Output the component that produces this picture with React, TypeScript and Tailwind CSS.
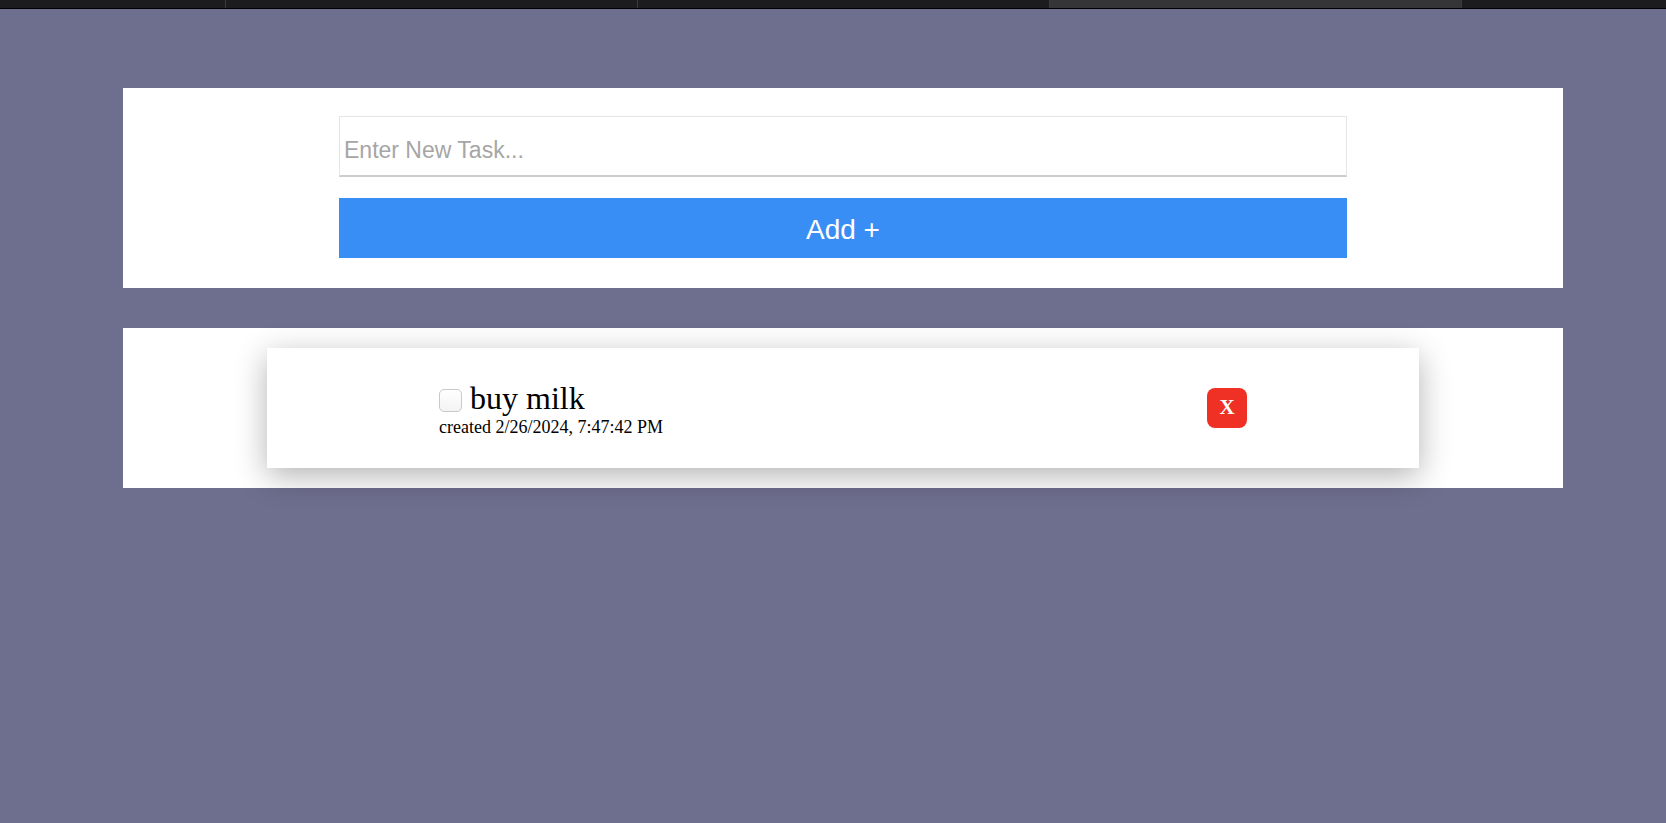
const TABS = [
  { w: 'w-[225px]', active: false },
  { w: 'w-[412px]', active: false },
  { w: 'w-[412px]', active: false },
  { w: 'w-[412px]', active: true },
  { w: 'flex-1', active: false },
];

export default function App() {
  return (
    <div className="min-h-screen bg-[#6e6e8e] flex flex-col">
      {/* browser tab strip */}
      <div className="flex h-[9px] bg-[#1c1c1e] border-b border-black">
        {TABS.map((t, i) => (
          <div
            key={i}
            className={`${t.w} h-full ${t.active ? 'bg-[#353538]' : 'bg-[#1c1c1e]'} ${i > 0 ? 'border-l border-[#3a3a3c]' : ''}`}
          />
        ))}
      </div>

      <div className="ml-[123px] w-[1440px] mt-[79px] flex flex-col gap-[40px]">
        {/* new task form */}
        <div className="bg-white pt-[28px] pb-[30px]">
          <div className="w-[1008px] mx-auto flex flex-col gap-[21px]">
            <input
              type="text"
              placeholder="Enter New Task..."
              className="h-[61px] w-full border border-[#e6e6e6] border-b-2 border-b-[#cdcdcd] pl-[4px] pt-[8px] text-[23px] text-gray-800 placeholder:text-[#a6a6a6] outline-none font-['Liberation_Sans',Arial,sans-serif]"
            />
            <button className="h-[60px] w-full bg-[#388ef5] text-white text-[28px] pt-[3px] font-['Liberation_Sans',Arial,sans-serif]">
              Add +
            </button>
          </div>
        </div>

        {/* task list */}
        <div className="bg-white py-[20px]">
          <div className="w-[1152px] h-[120px] mx-auto bg-white shadow-[0_8px_30px_rgba(0,0,0,0.3)] flex items-center justify-between px-[172px] font-['Liberation_Serif','Times_New_Roman',serif]">
            <div className="flex flex-col items-start text-black">
              <div className="flex items-center">
                <input
                  type="checkbox"
                  className="appearance-none w-[23px] h-[23px] mt-[5px] mr-[8px] rounded-[5px] border border-[#c9c9c9] bg-gradient-to-b from-white to-[#f3f3f3]"
                />
                <span className="text-[32px] leading-[37px] pt-[1px]">buy milk</span>
              </div>
              <span className="text-[18px] leading-[21px]">created 2/26/2024, 7:47:42 PM</span>
            </div>
            <button className="w-[40px] h-[40px] rounded-lg bg-[#ee3124] text-white text-[21px] font-bold flex items-center justify-center">
              X
            </button>
          </div>
        </div>
      </div>
    </div>
  );
}
